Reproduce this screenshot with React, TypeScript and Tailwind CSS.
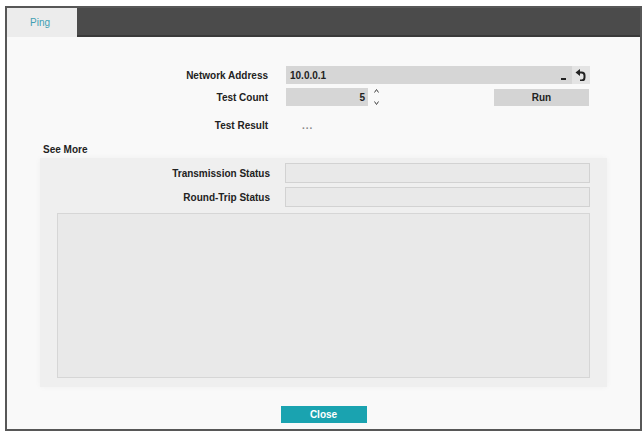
import { useState } from "react";

const font = { fontFamily: '"Liberation Sans", Arial, sans-serif' };

const UndoIcon = () => (
  <svg width="12" height="12" viewBox="0 0 12 12">
    <path d="M0.5 3.5 L5 0 L5 7 Z" fill="#222" />
    <path d="M4 3.5 H6.5 A3 3 0 0 1 9.5 6.5 V8.5 A3 3 0 0 1 6.5 11.5 H5" fill="none" stroke="#222" strokeWidth="2" />
  </svg>
);

const Spinner = () => (
  <div className="ml-[6px] flex h-[18px] flex-col justify-between py-[1px]">
    <svg width="5" height="4" viewBox="0 0 5 4">
      <path d="M0.5 3.5 L2.5 0.5 L4.5 3.5" fill="none" stroke="#444" strokeWidth="1" />
    </svg>
    <svg width="5" height="4" viewBox="0 0 5 4">
      <path d="M0.5 0.5 L2.5 3.5 L4.5 0.5" fill="none" stroke="#444" strokeWidth="1" />
    </svg>
  </div>
);

export default function App() {
  const [count] = useState(5);

  return (
    <div className="h-[432px] w-[643px] bg-white pl-[5px] pt-[6px]" style={font}>
      <div className="flex h-[425px] w-[637px] flex-col border-2 border-[#575757] bg-[#f9f9f9]">
        {/* Tab header */}
        <div className="flex h-[29px]">
          <div className="flex w-[70px] items-center bg-[#ececec] pl-[23px] text-[10px] text-[#3f9fb3]">
            Ping
          </div>
          <div className="flex-1 bg-[#4b4b4b] shadow-[inset_0_-2px_0_#3a3a3a]" />
        </div>

        {/* Form */}
        <div className="mt-[29px] flex flex-col text-[10px] font-bold text-[#222]">
          <div className="flex h-[18px] items-center">
            <div className="w-[261px] text-right">Network Address</div>
            <div className="ml-[18px] flex h-[18px] w-[286px] items-center justify-between bg-[#d6d6d6] pl-[4px] pr-[6px]">
              <span>10.0.0.1</span>
              <span className="mt-[7px] h-[2px] w-[5px] bg-[#222]" />
            </div>
            <div className="flex h-[18px] w-[18px] items-center justify-center bg-[#e4e4e4]">
              <UndoIcon />
            </div>
          </div>

          <div className="mt-[4px] flex h-[18px] items-center">
            <div className="w-[261px] text-right">Test Count</div>
            <div className="ml-[18px] flex h-[18px] w-[82px] items-center justify-end bg-[#d6d6d6] pr-[3px]">
              {count}
            </div>
            <Spinner />
            <button className="ml-[115px] h-[17px] w-[95px] bg-[#d4d4d4] text-[10px] font-bold text-[#222]">
              Run
            </button>
          </div>

          <div className="mt-[10px] flex h-[18px] items-center">
            <div className="w-[261px] text-right">Test Result</div>
            <div className="ml-[34px] tracking-[1px] text-[#888]">...</div>
          </div>

          <div className="ml-[36px] mt-[8px] h-[14px]">See More</div>

          {/* See More panel */}
          <div className="ml-[33px] mt-[2px] flex h-[229px] w-[567px] flex-col bg-[#efefef] px-[17px] pt-[5px] shadow-[0_0_6px_rgba(0,0,0,0.04)]">
            <div className="flex h-[20px] items-center">
              <div className="w-[213px] text-right">Transmission Status</div>
              <div className="ml-[15px] h-[20px] flex-1 border border-[#d2d2d2] bg-[#e9e9e9]" />
            </div>
            <div className="mt-[4px] flex h-[20px] items-center">
              <div className="w-[213px] text-right">Round-Trip Status</div>
              <div className="ml-[15px] h-[20px] flex-1 border border-[#d2d2d2] bg-[#e9e9e9]" />
            </div>
            <div className="mt-[6px] h-[165px] border border-[#d6d6d6] bg-[#e9e9e9]" />
          </div>
        </div>

        <div className="mt-[19px] flex justify-center">
          <button className="h-[17px] w-[86px] bg-[#1aa3b0] text-[10px] font-bold text-white">
            Close
          </button>
        </div>
      </div>
    </div>
  );
}
